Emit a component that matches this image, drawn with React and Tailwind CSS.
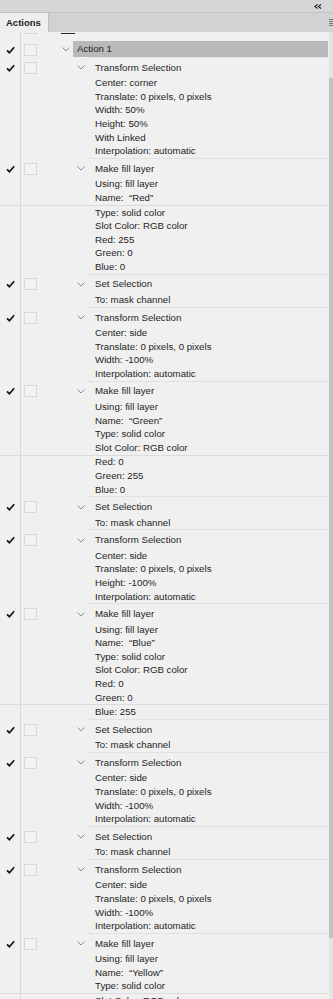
import React from "react";

const sections = [
  { t: "Transform Selection", d: ["Center: corner", "Translate: 0 pixels, 0 pixels", "Width: 50%", "Height: 50%", "With Linked", "Interpolation: automatic"] },
  { t: "Make fill layer", d: ["Using: fill layer", "Name:  “Red”", { s: "Type: solid color" }, "Slot Color: RGB color", "Red: 255", "Green: 0", "Blue: 0"] },
  { t: "Set Selection", d: ["To: mask channel"] },
  { t: "Transform Selection", d: ["Center: side", "Translate: 0 pixels, 0 pixels", "Width: -100%", "Interpolation: automatic"] },
  { t: "Make fill layer", d: ["Using: fill layer", "Name:  “Green”", "Type: solid color", "Slot Color: RGB color", { s: "Red: 0" }, "Green: 255", "Blue: 0"] },
  { t: "Set Selection", d: ["To: mask channel"] },
  { t: "Transform Selection", d: ["Center: side", "Translate: 0 pixels, 0 pixels", "Height: -100%", "Interpolation: automatic"] },
  { t: "Make fill layer", d: ["Using: fill layer", "Name:  “Blue”", "Type: solid color", "Slot Color: RGB color", "Red: 0", "Green: 0", { s: "Blue: 255" }] },
  { t: "Set Selection", d: ["To: mask channel"] },
  { t: "Transform Selection", d: ["Center: side", "Translate: 0 pixels, 0 pixels", "Width: -100%", "Interpolation: automatic"] },
  { t: "Set Selection", d: ["To: mask channel"] },
  { t: "Transform Selection", d: ["Center: side", "Translate: 0 pixels, 0 pixels", "Width: -100%", "Interpolation: automatic"] },
  { t: "Make fill layer", d: ["Using: fill layer", "Name:  “Yellow”", "Type: solid color", { s: "Slot Color: RGB color" }, "Red: 255", "Green: 255"] },
];

function Check() {
  return (
    <svg width="9" height="8" viewBox="0 0 9 8">
      <path d="M1 4.3 L3.4 6.7 L8.2 1.2" fill="none" stroke="#141414" strokeWidth="1.7" />
    </svg>
  );
}

function Box() {
  return <div className="w-[13px] h-[12px] border border-[#d9d9d9] bg-[#f3f3f3]" />;
}

function Chev() {
  return (
    <svg width="8" height="5" viewBox="0 0 8 5">
      <path d="M0.5 0.5 L4 4 L7.5 0.5" fill="none" stroke="#8c8c8c" strokeWidth="1" />
    </svg>
  );
}

function LeftCols({ check, box }) {
  return (
    <>
      <div className="w-[21px] shrink-0 border-r border-[#d8d8d8] flex items-center justify-center pt-[2px]">
        {check && <Check />}
      </div>
      <div className="w-[17px] shrink-0 flex items-center pl-[3px] pt-[2px]">{box && <Box />}</div>
    </>
  );
}

function Header({ title }) {
  return (
    <div className="flex h-[19.5px]">
      <LeftCols check box />
      <div className="w-[39px] shrink-0" />
      <div className="w-[11px] shrink-0 flex items-center pt-[2px]">
        <Chev />
      </div>
      <div className="flex-1 border-t border-[#e1e1e1] flex items-center pl-[7px] pt-[1px]">{title}</div>
    </div>
  );
}

function Detail({ text, split }) {
  return (
    <div className={split ? "flex h-[14.6px] border-t border-[#dcdcdc]" : "flex h-[13.6px]"}>
      <LeftCols />
      <div className="w-[50px] shrink-0" />
      <div className="flex-1 flex items-center pl-[7px] whitespace-pre">{text}</div>
    </div>
  );
}

export default function App() {
  return (
    <div className="w-[333px] h-[999px] overflow-hidden bg-[#f0f0f0] text-[#1e1e1e] font-['Liberation_Sans',Arial,sans-serif] text-[9.7px] leading-[12px] flex flex-col">
      {/* top bar */}
      <div className="h-[13px] shrink-0 bg-[#d6d6d6] border-b border-[#c3c3c3] flex items-center justify-end pr-[11px]">
        <svg width="8" height="5" viewBox="0 0 8 5">
          <path d="M3.5 0.5 L1 2.5 L3.5 4.5 M7 0.5 L4.5 2.5 L7 4.5" fill="none" stroke="#222" strokeWidth="1.2" />
        </svg>
      </div>
      {/* tab strip */}
      <div className="h-[19px] shrink-0 bg-[#d2d2d2] flex">
        <div className="w-[49px] bg-[#eeeeee] border-r border-[#bdbdbd] flex items-center pl-[6px] font-bold text-[9.5px]">
          Actions
        </div>
        <div className="flex-1" />
        <div className="w-[4px] flex flex-col justify-center gap-[1px]">
          <div className="h-[1px] bg-[#777]" />
          <div className="h-[1px] bg-[#777]" />
          <div className="h-[1px] bg-[#777]" />
          <div className="h-[1px] bg-[#777]" />
        </div>
      </div>
      {/* body */}
      <div className="flex flex-1 min-h-0">
        <div className="w-[328px] shrink-0 flex flex-col">
          {/* partial row */}
          <div className="flex h-[9px] shrink-0">
            <div className="w-[21px] shrink-0 border-r border-[#d8d8d8]" />
            <div className="w-[17px] shrink-0 pl-[3px]">
              <div className="w-[13px] h-[2px] border border-t-0 border-[#d9d9d9]" />
            </div>
            <div className="ml-[23px] mt-[1px] w-[14px] h-[1px] bg-[#2a2a2a]" />
          </div>
          {/* Action 1 */}
          <div className="flex h-[16px] shrink-0">
            <LeftCols check box />
            <div className="w-[24px] shrink-0" />
            <div className="w-[11px] shrink-0 flex items-center pt-[1px]">
              <Chev />
            </div>
            <div className="flex-1 bg-[#b9b9b9] flex items-center pl-[4px]">Action 1</div>
          </div>
          {sections.map((sec, i) => (
            <div key={i} className="flex flex-col shrink-0">
              <Header title={sec.t} />
              {sec.d.map((d, j) =>
                typeof d === "string" ? <Detail key={j} text={d} /> : <Detail key={j} text={d.s} split />
              )}
            </div>
          ))}
        </div>
        <div className="w-[1px] shrink-0" />
        <div className="w-[4px] shrink-0 bg-[#e4e4e4] flex flex-col">
          <div className="h-[46px] shrink-0" />
          <div className="h-[860px] shrink-0 bg-[#c2c2c2]" />
        </div>
      </div>
    </div>
  );
}
